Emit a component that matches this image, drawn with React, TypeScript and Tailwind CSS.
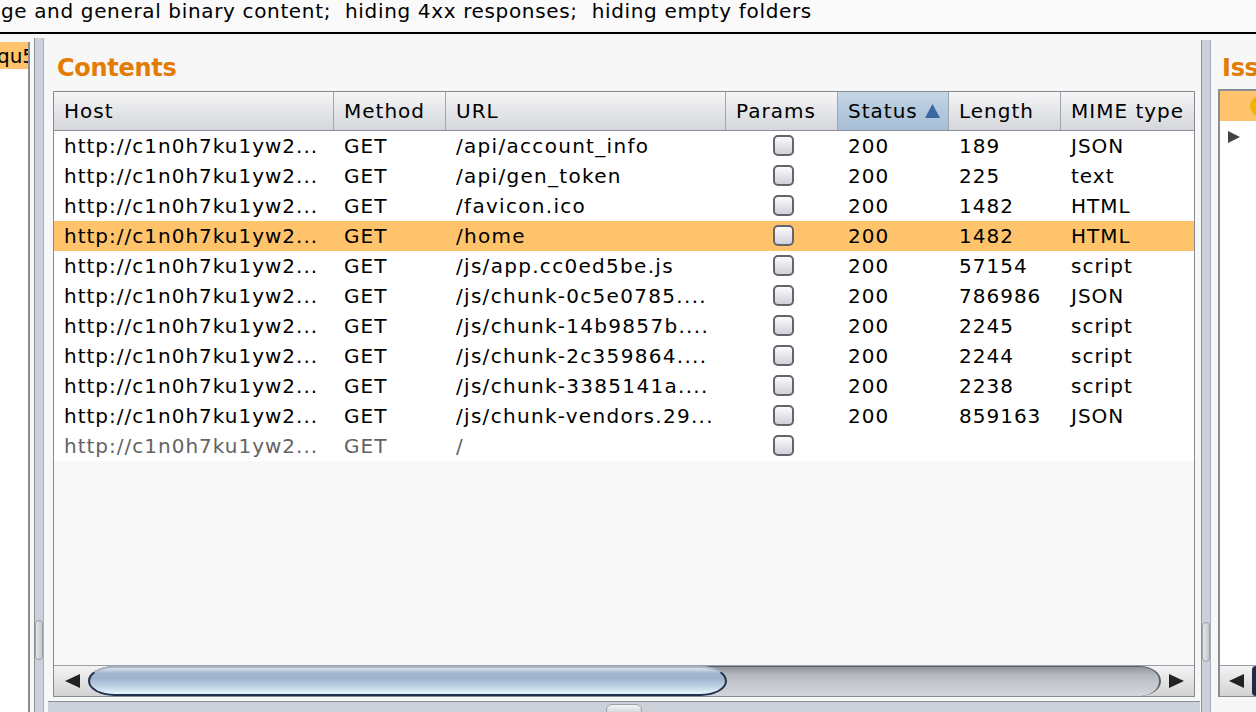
import React from 'react'

type Row = { url: string; status: string; length: string; mime: string; faded?: boolean; selected?: boolean }

const HOST = 'http://c1n0h7ku1yw2...'

const rows: Row[] = [
  { url: '/api/account_info', status: '200', length: '189', mime: 'JSON' },
  { url: '/api/gen_token', status: '200', length: '225', mime: 'text' },
  { url: '/favicon.ico', status: '200', length: '1482', mime: 'HTML' },
  { url: '/home', status: '200', length: '1482', mime: 'HTML', selected: true },
  { url: '/js/app.cc0ed5be.js', status: '200', length: '57154', mime: 'script' },
  { url: '/js/chunk-0c5e0785....', status: '200', length: '786986', mime: 'JSON' },
  { url: '/js/chunk-14b9857b....', status: '200', length: '2245', mime: 'script' },
  { url: '/js/chunk-2c359864....', status: '200', length: '2244', mime: 'script' },
  { url: '/js/chunk-3385141a....', status: '200', length: '2238', mime: 'script' },
  { url: '/js/chunk-vendors.29...', status: '200', length: '859163', mime: 'JSON' },
  { url: '/', status: '', length: '', mime: '', faded: true },
]

function Checkbox() {
  return (
    <div className="ml-[3px] h-[21px] w-[21px] rounded-[5px] border-2 border-[#64656c] bg-[linear-gradient(#fbfbfc,#d0d2d8)]" />
  )
}

function VSplitter({ top }: { top: string }) {
  return (
    <div className={`${top} flex w-[10px] shrink-0 flex-col items-center border-l border-r border-l-[#8b8f98] border-r-[#a9adb5] bg-[#ccd0d8]`}>
      <div className="mt-[582px] h-[40px] w-[8px] rounded-full border border-[#9ca0a8] bg-[linear-gradient(to_right,#e4e6ea,#c3c6cd)]" />
    </div>
  )
}

function ArrowLeft() {
  return (
    <svg width="15" height="14" viewBox="0 0 15 14">
      <path d="M0 7 L15 0 L15 14 Z" fill="#222" />
    </svg>
  )
}

function ArrowRight() {
  return (
    <svg width="15" height="14" viewBox="0 0 15 14">
      <path d="M15 7 L0 0 L0 14 Z" fill="#222" />
    </svg>
  )
}

export default function App() {
  return (
    <div className="h-[712px] w-[1256px] overflow-hidden bg-[#f7f7f7] font-['DejaVu_Sans',sans-serif] text-[20px] tracking-[1px] text-black">
      {/* filter bar */}
      <div className="h-[34px] overflow-hidden border-b-2 border-black bg-[#fafafa]">
        <div className="-ml-[12px] whitespace-pre leading-[22px] tracking-[0.65px]">
          age and general binary content;  hiding 4xx responses;  hiding empty folders
        </div>
      </div>

      <div className="flex h-[678px]">
        {/* left site map panel */}
        <div className="mt-[8px] w-[30px] shrink-0 overflow-hidden border-r-2 border-[#8a8d96] bg-white">
          <div className="flex h-[27px] items-center overflow-hidden whitespace-nowrap bg-[#ffc46b] pl-0 tracking-normal">
            <span className="-ml-[3px]">qu5</span>
          </div>
        </div>
        <div className="w-[4px] shrink-0" />
        <VSplitter top="mt-[4px]" />

        {/* contents */}
        <div className="flex w-[1157px] shrink-0 flex-col pl-[9px] pr-[6px]">
          <div className="h-[57px] pl-[4px] pt-[20px] text-[24px] font-bold leading-[28px] tracking-[-0.3px] text-[#e37c04]">
            Contents
          </div>
          <div className="flex h-[607px] w-[1142px] flex-col border border-[#878a93] bg-[#f8f8f8]">
            {/* header */}
            <div className="flex h-[39px] shrink-0 border-b border-[#8d9098] bg-[linear-gradient(#f6f6f7,#e6e7ea_45%,#d6d7dc)]">
              <div className="flex w-[280px] items-center border-r border-[#a3a5ac] pl-[10px]">Host</div>
              <div className="flex w-[112px] items-center border-r border-[#a3a5ac] pl-[10px]">Method</div>
              <div className="flex w-[280px] items-center border-r border-[#a3a5ac] pl-[10px]">URL</div>
              <div className="flex w-[112px] items-center border-r border-[#a3a5ac] pl-[10px]">Params</div>
              <div className="flex w-[111px] items-center border-r border-[#a3a5ac] bg-[linear-gradient(#c6d7e7,#b2c8dc_50%,#a7bfd6)] pl-[10px]">
                <span>Status</span>
                <svg className="ml-[7px]" width="15" height="14" viewBox="0 0 15 14">
                  <path d="M7.5 0 L15 14 L0 14 Z" fill="#3d67a0" />
                </svg>
              </div>
              <div className="flex w-[112px] items-center border-r border-[#a3a5ac] pl-[10px]">Length</div>
              <div className="flex w-[133px] items-center pl-[10px]">MIME type</div>
            </div>

            {/* rows */}
            <div className="flex-1">
              {rows.map((r, i) => (
                <div
                  key={i}
                  className={`flex h-[30px] items-center whitespace-nowrap ${r.selected ? 'bg-[#ffc46b]' : 'bg-white'} ${r.faded ? 'text-[#636363]' : ''}`}
                >
                  <div className="w-[280px] overflow-hidden pl-[10px]">{HOST}</div>
                  <div className="w-[112px] pl-[10px]">GET</div>
                  <div className="w-[280px] overflow-hidden pl-[10px] tracking-[1.3px]">{r.url}</div>
                  <div className="flex w-[112px] justify-center">
                    <Checkbox />
                  </div>
                  <div className="w-[111px] pl-[10px]">{r.status}</div>
                  <div className="w-[112px] pl-[10px]">{r.length}</div>
                  <div className="w-[133px] pl-[10px]">{r.mime}</div>
                </div>
              ))}
            </div>

            {/* horizontal scrollbar */}
            <div className="flex h-[31px] shrink-0 border-t border-[#9a9ea6] bg-[linear-gradient(#f3f3f3,#e0e0e0_60%,#d2d2d2)]">
              <div className="flex w-[34px] items-center justify-center pl-[2px]">
                <ArrowLeft />
              </div>
              <div className="relative flex-1">
                <div className="h-full rounded-tr-[22px_16px] rounded-br-[22px_16px] rounded-tl-[28px_16px] rounded-bl-[28px_16px] border-t border-r-2 border-[#5d616b] bg-[linear-gradient(#8f939b,#b3b7bf_25%,#c6c9d0_60%,#d2d5db)]" />
                <div className="absolute left-0 top-0 h-full w-[639px] rounded-tl-[28px_16px] rounded-bl-[28px_16px] rounded-tr-[28px_16px] rounded-br-[28px_16px] border-2 border-[#21314c] border-t-[#aab7c8] bg-[linear-gradient(#dbe3ec,#a2b7cf_20%,#9fb4cd_40%,#bed1e3_70%,#e4f7ff)]" />
              </div>
              <div className="flex w-[33px] items-center justify-center pr-[2px]">
                <ArrowRight />
              </div>
            </div>
          </div>
          {/* lower splitter */}
          <div className="-ml-[5px] mr-[-5px] mt-[4px] flex h-[11px] shrink-0 justify-start border-t border-[#8e929b] bg-[#ccd0d8]">
            <div className="ml-[558px] mt-[2px] h-[12px] w-[36px] rounded-full border border-[#9ca0a8] bg-[linear-gradient(#f4f5f7,#c8cbd2)]" />
          </div>
        </div>

        <VSplitter top="mt-[6px]" />
        <div className="w-[7px] shrink-0" />

        {/* issues panel */}
        <div className="flex flex-1 flex-col overflow-hidden">
          <div className="h-[55px] whitespace-nowrap pl-[4px] pt-[20px] text-[24px] font-bold leading-[28px] tracking-[-0.3px] text-[#e37c04]">
            Issues
          </div>
          <div className="flex h-[608px] flex-col border-l-2 border-t-2 border-b border-[#8a8d96] bg-white">
            <div className="flex h-[30px] shrink-0 items-center bg-[#ffc46b] pl-[30px]">
              <div className="h-[20px] w-[20px] shrink-0 rounded-full bg-[#f2b400]" />
            </div>
            <div className="flex-1 pl-[8px] pt-[10px]">
              <svg width="12" height="12" viewBox="0 0 12 12">
                <path d="M0 0 L12 6 L0 12 Z" fill="#444" />
              </svg>
            </div>
            <div className="flex h-[31px] shrink-0 border-t border-[#9a9ea6] bg-[linear-gradient(#f3f3f3,#e0e0e0_60%,#d2d2d2)]">
              <div className="flex w-[32px] shrink-0 items-center justify-center">
                <ArrowLeft />
              </div>
              <div className="flex-1 rounded-l-[12px] bg-[#1e2b42]" />
            </div>
          </div>
        </div>
      </div>
    </div>
  )
}
